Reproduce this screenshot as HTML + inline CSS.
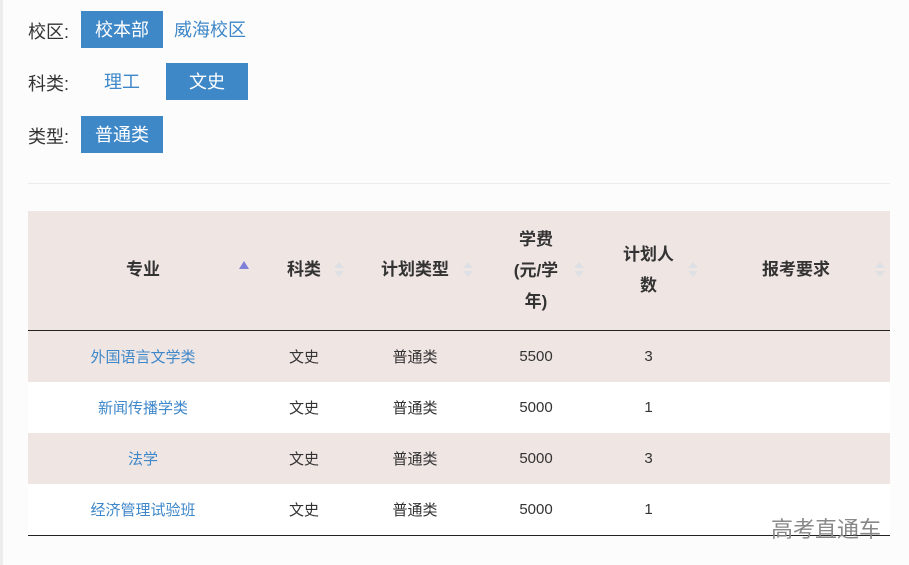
<!DOCTYPE html>
<html><head><meta charset="utf-8"><style>
body{margin:0;width:909px;height:565px;background:#fdfcfc;font-family:"Liberation Sans","Noto Sans CJK SC",sans-serif;position:relative;overflow:hidden}
.strip{position:absolute;left:0;top:0;width:3px;height:565px;background:#ececec}
.lbl{position:absolute;left:28px;font-size:18px;color:#333}
.btn{position:absolute;height:37px;line-height:39px;text-align:center;font-size:18px;color:#3e87c9}
.btn.on{background:#3f88c8;color:#fff}
.hr{position:absolute;left:28px;top:183px;width:862px;height:1px;background:#ececec}
.tbl{position:absolute;left:28px;top:211px;width:862px}
.row{position:absolute;left:0;width:862px;height:51px}
.c{position:absolute;text-align:center;font-size:14px;color:#333}
.h{font-weight:bold;font-size:17px;color:#333;line-height:31px}
.ic{position:absolute;width:8px}
.ic:before{content:"";position:absolute;left:0;top:0;border:5px solid transparent;border-bottom:6px solid #dde0e4;border-top:0}
.ic:after{content:"";position:absolute;left:0;top:9px;border:5px solid transparent;border-top:6px solid #dde0e4;border-bottom:0}
.d{position:absolute;text-align:center}
</style></head><body>
<div class="strip"></div>
<div class="lbl" style="top:18px">校区:</div>
<div class="btn on" style="left:81px;top:11px;width:82px">校本部</div>
<div class="btn" style="left:169px;top:11px;width:82px">威海校区</div>
<div class="lbl" style="top:70px">科类:</div>
<div class="btn" style="left:81px;top:63px;width:82px">理工</div>
<div class="btn on" style="left:166px;top:63px;width:82px">文史</div>
<div class="lbl" style="top:123px">类型:</div>
<div class="btn on" style="left:81px;top:116px;width:82px">普通类</div>
<div class="hr"></div>
<div class="tbl">
 <div class="row" style="top:0;height:119px;background:#efe5e3;border-bottom:1px solid #222"></div>
 <div class="c h" style="left:0;width:230px;top:43px">专业</div>
 <div style="position:absolute;left:211px;top:50px;border:5px solid transparent;border-bottom:8px solid #7f7fd8;border-top:0"></div>
 <div class="c h" style="left:230px;width:92px;top:43px">科类</div><div class="ic" style="left:306px;top:51px"></div>
 <div class="c h" style="left:322px;width:130px;top:43px">计划类型</div><div class="ic" style="left:435px;top:51px"></div>
 <div class="c h" style="left:452px;width:112px;top:13px">学费<br>(元/学<br>年)</div><div class="ic" style="left:546px;top:51px"></div>
 <div class="c h" style="left:564px;width:113px;top:28px">计划人<br>数</div><div class="ic" style="left:660px;top:51px"></div>
 <div class="c h" style="left:677px;width:185px;top:43px;text-align:left;padding-left:57px;box-sizing:border-box">报考要求</div><div class="ic" style="left:847px;top:51px"></div>

 <div class="row" style="top:120px;background:#efe5e3"></div>
 <div class="row" style="top:171px;background:#fff"></div>
 <div class="row" style="top:222px;background:#efe5e3"></div>
 <div class="row" style="top:273px;background:#fff;border-bottom:1px solid #222"></div>
</div>
<div style="position:absolute;left:28px;top:331px;width:862px;font-size:15px;color:#333">
 <div class="d" style="top:15px;left:0;width:230px;color:#3e87c9">外国语言文学类</div>
 <div class="d" style="top:66px;left:0;width:230px;color:#3e87c9">新闻传播学类</div>
 <div class="d" style="top:117px;left:0;width:230px;color:#3e87c9">法学</div>
 <div class="d" style="top:168px;left:0;width:230px;color:#3e87c9">经济管理试验班</div>
 <div class="d" style="top:15px;left:230px;width:92px">文史</div>
 <div class="d" style="top:66px;left:230px;width:92px">文史</div>
 <div class="d" style="top:117px;left:230px;width:92px">文史</div>
 <div class="d" style="top:168px;left:230px;width:92px">文史</div>
 <div class="d" style="top:15px;left:322px;width:130px">普通类</div>
 <div class="d" style="top:66px;left:322px;width:130px">普通类</div>
 <div class="d" style="top:117px;left:322px;width:130px">普通类</div>
 <div class="d" style="top:168px;left:322px;width:130px">普通类</div>
 <div class="d" style="top:17px;left:452px;width:112px">5500</div>
 <div class="d" style="top:68px;left:452px;width:112px">5000</div>
 <div class="d" style="top:119px;left:452px;width:112px">5000</div>
 <div class="d" style="top:170px;left:452px;width:112px">5000</div>
 <div class="d" style="top:17px;left:564px;width:113px">3</div>
 <div class="d" style="top:68px;left:564px;width:113px">1</div>
 <div class="d" style="top:119px;left:564px;width:113px">3</div>
 <div class="d" style="top:170px;left:564px;width:113px">1</div>
</div>
<div style="position:absolute;left:771px;top:512px;font-size:22px;color:#888">高考直通车</div>
</body></html>
